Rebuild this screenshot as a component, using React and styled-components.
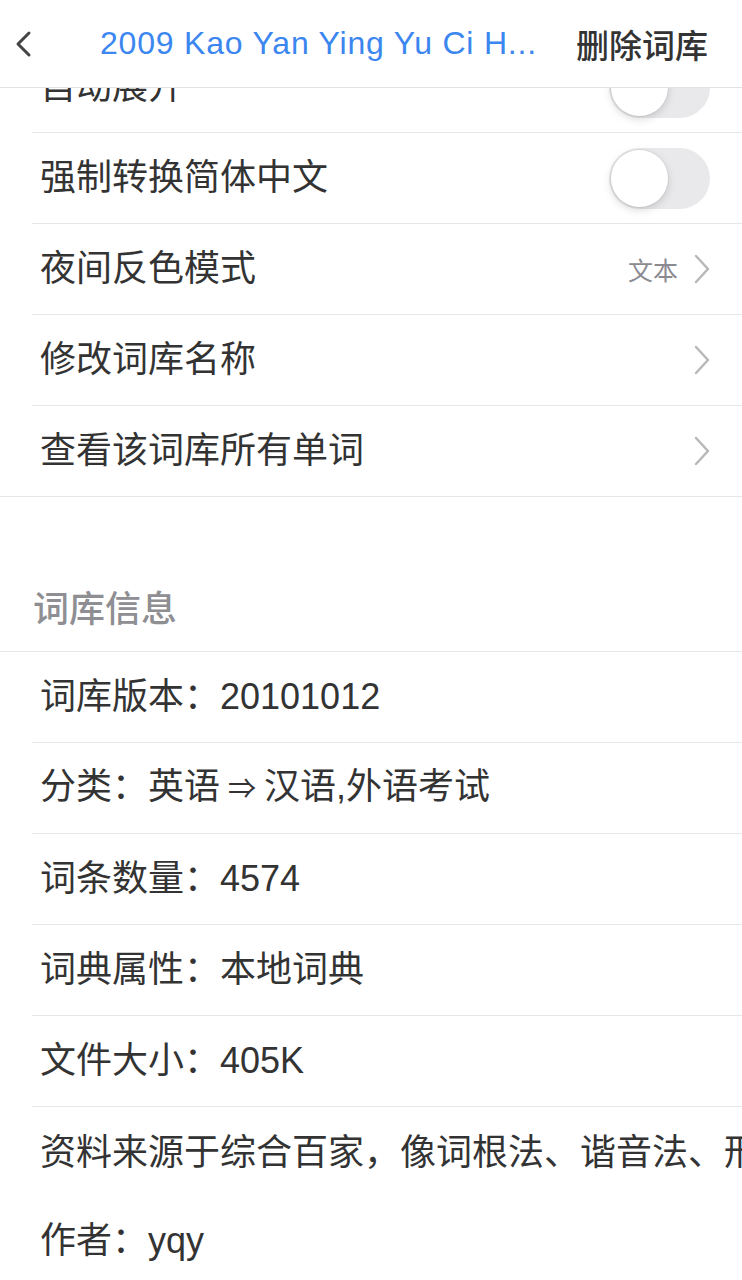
import React from 'react';
import styled, { createGlobalStyle } from 'styled-components';

const GlobalStyle = createGlobalStyle`
  body {
    margin: 0;
    background: #fff;
    font-family: "Liberation Sans", "Noto Sans CJK SC", sans-serif;
    color: #333;
  }
`;

const settings = [
  { label: '自动展开', type: 'toggle' },
  { label: '强制转换简体中文', type: 'toggle' },
  { label: '夜间反色模式', type: 'link', value: '文本' },
  { label: '修改词库名称', type: 'link' },
  { label: '查看该词库所有单词', type: 'link' },
];

const info = [
  { label: '词库版本：', value: '20101012' },
  { label: '分类：', value: ['英语', '汉语,外语考试'] },
  { label: '词条数量：', value: '4574' },
  { label: '词典属性：', value: '本地词典' },
  { label: '文件大小：', value: '405K' },
];

const BackIcon = () => (
  <svg width="20" height="28" viewBox="0 0 20 28">
    <path d="M15 3 L4 14 L15 25" fill="none" stroke="#444" strokeWidth="3" strokeLinecap="round" strokeLinejoin="round" />
  </svg>
);

const Chevron = () => (
  <svg width="16" height="30" viewBox="0 0 16 30">
    <path d="M2 2 L14 15 L2 28" fill="none" stroke="#b8b8bb" strokeWidth="2.5" strokeLinecap="round" strokeLinejoin="round" />
  </svg>
);

const App = () => {
  return (
    <Page>
      <GlobalStyle />
      <NavBar>
        <BackButton>
          <BackIcon />
        </BackButton>
        <NavTitle>2009 Kao Yan Ying Yu Ci H...</NavTitle>
        <NavAction>删除词库</NavAction>
      </NavBar>

      <Content>
        {/* 列表已向上滚动了一部分 */}
        <ScrollArea>
          {settings.map((item, i) => (
            <Row key={item.label} $full={i === settings.length - 1}>
              <RowLabel>{item.label}</RowLabel>
              {item.type === 'toggle' ? (
                <Switch>
                  <Knob />
                </Switch>
              ) : (
                <RowRight>
                  {item.value && <RowValue>{item.value}</RowValue>}
                  <Chevron />
                </RowRight>
              )}
            </Row>
          ))}

          <SectionHeader>词库信息</SectionHeader>

          {info.map((item) => (
            <Row key={item.label}>
              <RowLabel>
                {item.label}
                {Array.isArray(item.value) ? (
                  <>
                    {item.value[0]}
                    <Arrow>⇒</Arrow>
                    {item.value[1]}
                  </>
                ) : (
                  item.value
                )}
              </RowLabel>
            </Row>
          ))}

          <PlainRow>
            <RowLabel>资料来源于综合百家，像词根法、谐音法、形象法、联想法等</RowLabel>
          </PlainRow>
          <PlainRow $short>
            <RowLabel>作者：yqy</RowLabel>
          </PlainRow>
        </ScrollArea>
      </Content>
    </Page>
  );
};

export default App;

// Styled components

const Page = styled.div`
  width: 742px;
  height: 1280px;
  display: flex;
  flex-direction: column;
  overflow: hidden;
  background: #fff;
`;

const NavBar = styled.div`
  position: relative;
  z-index: 2;
  flex: 0 0 auto;
  height: 87px;
  display: flex;
  align-items: center;
  background: #fff;
  border-bottom: 1px solid #e2e2e2;
`;

const BackButton = styled.div`
  width: 100px;
  padding-left: 14px;
  box-sizing: border-box;
  display: flex;
  align-items: center;
`;

const NavTitle = styled.div`
  flex: 1;
  font-size: 32px;
  letter-spacing: 0.8px;
  font-weight: 500;
  color: #3b86ef;
  white-space: nowrap;
  overflow: hidden;
`;

const NavAction = styled.div`
  padding-right: 34px;
  font-size: 33px;
  font-weight: 500;
  color: #333;
  white-space: nowrap;
`;

const Content = styled.div`
  flex: 1;
  overflow: hidden;
`;

const ScrollArea = styled.div`
  margin-top: -46px;
`;

const Row = styled.div`
  height: 90px;
  display: flex;
  align-items: center;
  justify-content: space-between;
  margin-left: ${(p) => (p.$full ? '0' : '32px')};
  padding-left: ${(p) => (p.$full ? '40px' : '8px')};
  padding-right: 32px;
  border-bottom: 1px solid #e6e6e6;
`;

const PlainRow = styled.div`
  height: ${(p) => (p.$short ? '84px' : '92px')};
  display: flex;
  align-items: center;
  padding-left: 40px;
  white-space: nowrap;
  overflow: hidden;
`;

const RowLabel = styled.div`
  font-size: 36px;
  line-height: 40px;
  color: #333;
  white-space: nowrap;
`;

const Arrow = styled.span`
  font-size: 28px;
  margin: 0 8px;
`;

const RowRight = styled.div`
  display: flex;
  align-items: center;
  gap: 16px;
`;

const RowValue = styled.span`
  font-size: 25px;
  color: #8a8a90;
`;

const Switch = styled.div`
  position: relative;
  width: 101px;
  height: 61px;
  border-radius: 31px;
  background: #e9e9eb;
`;

const Knob = styled.div`
  position: absolute;
  top: 2px;
  left: 2px;
  width: 57px;
  height: 57px;
  border-radius: 50%;
  background: #fff;
  box-shadow: 0 3px 8px rgba(0, 0, 0, 0.15), 0 0 0 1px rgba(0, 0, 0, 0.04);
`;

const SectionHeader = styled.div`
  height: 155px;
  box-sizing: border-box;
  padding: 93px 0 0 33px;
  font-size: 36px;
  line-height: 40px;
  font-weight: 500;
  color: #8e8e93;
  border-bottom: 1px solid #e6e6e6;
`;
